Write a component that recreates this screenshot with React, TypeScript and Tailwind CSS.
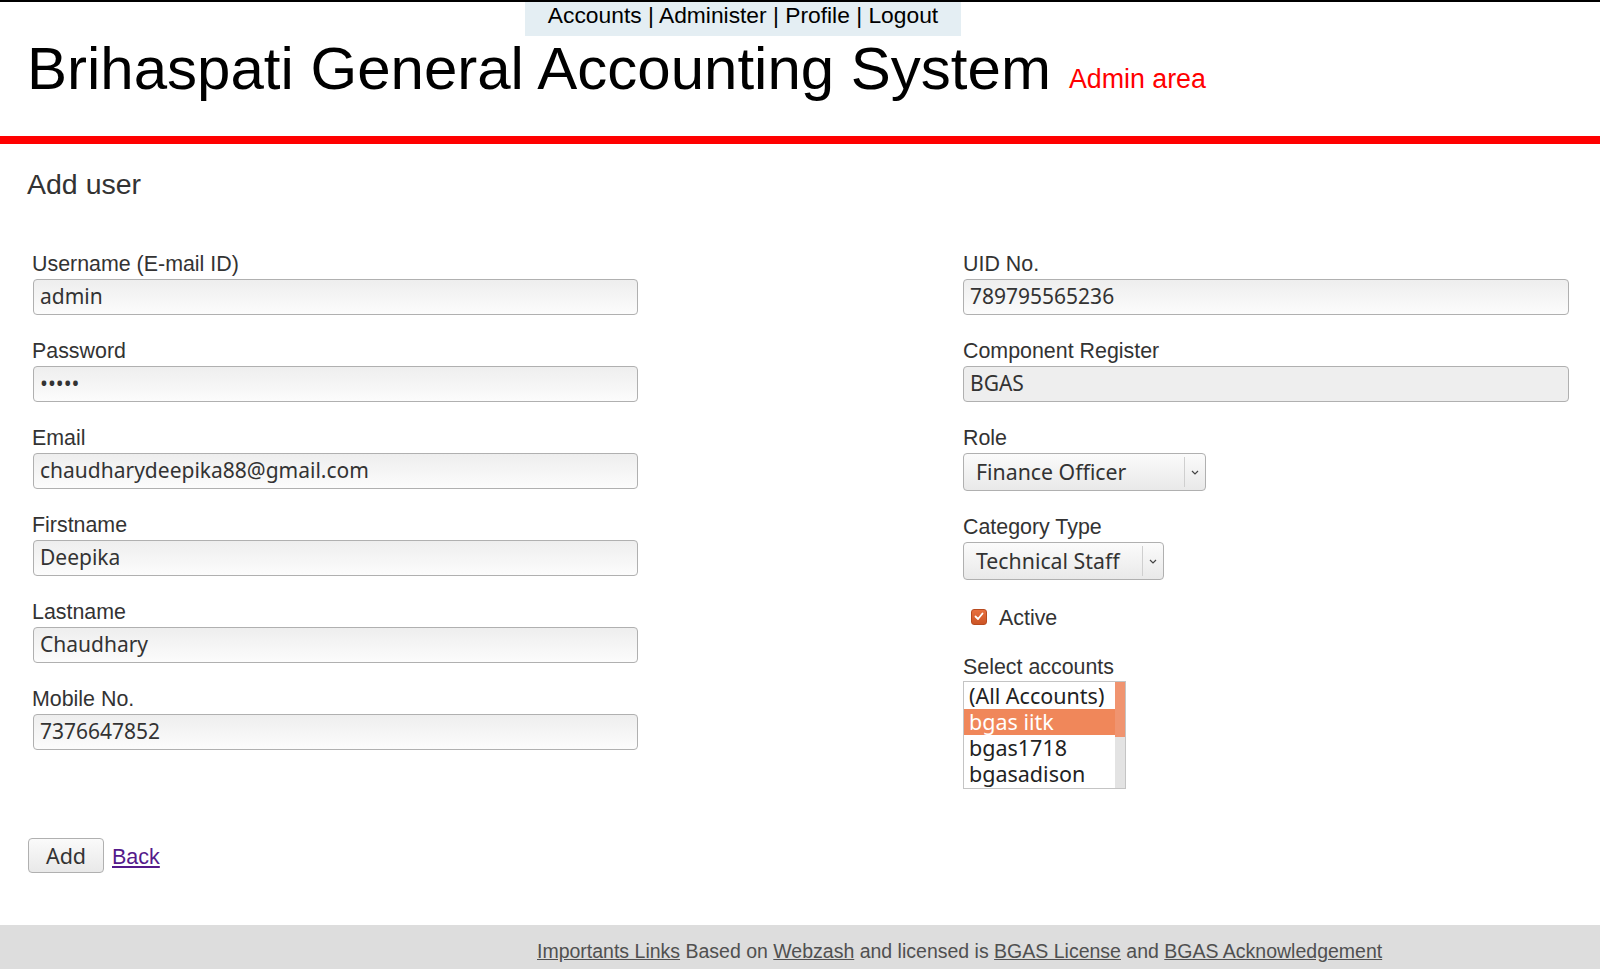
import React from "react";

const LAB = "font-['Liberation_Sans',Arial,sans-serif]";
const UB = "font-['Noto_Sans',sans-serif]";

function Field({ label, value, readOnly, shift }: { label: string; value: string; readOnly?: boolean; shift?: boolean }) {
  return (
    <div className="flex flex-col">
      <div className={`${LAB} text-[21.4px] leading-[24px] h-[24px] text-[#333] ${shift ? "-ml-[1px]" : ""}`}>{label}</div>
      <div
        className={`mt-[3px] h-[36px] rounded-[4px] border border-[#b0b0b0] flex items-center pl-[6px] ${UB} text-[21px] text-[#333] ${
          readOnly ? "bg-[#eeeeee]" : "bg-gradient-to-b from-[#eeeeee] to-[#fcfcfc]"
        }`}
      >
        {value}
      </div>
    </div>
  );
}

function SelectBox({ label, value, width }: { label: string; value: string; width: string }) {
  return (
    <div className="flex flex-col">
      <div className={`${LAB} text-[21.4px] leading-[24px] h-[24px] text-[#333]`}>{label}</div>
      <div
        className={`mt-[3px] h-[38px] ${width} rounded-[4px] border border-[#b0b0b0] bg-gradient-to-b from-[#fbfbfb] to-[#e9e9e9] flex items-center`}
      >
        <span className={`${UB} text-[21.3px] text-[#333] pl-[12px] flex-1`}>{value}</span>
        <span className="h-[30px] w-px bg-[#cfcfcf]" />
        <span className="w-[20px] flex items-center justify-center">
          <svg width="8" height="5" viewBox="0 0 8 5">
            <path d="M1 1 L4 4 L7 1" fill="none" stroke="#444" strokeWidth="1.2" />
          </svg>
        </span>
      </div>
    </div>
  );
}

export default function App() {
  const accounts = ["(All Accounts)", "bgas iitk", "bgas1718", "bgasadison"];
  return (
    <div className="w-[1600px] h-[969px] bg-white flex flex-col overflow-hidden">
      <div className="h-[2px] bg-black" />
      <div className="flex">
        <div
          className={`ml-[525px] w-[436px] h-[34px] bg-[#e4eef3] flex items-center justify-center ${LAB} text-[22.8px] text-black leading-none pb-[8px]`}
        >
          Accounts | Administer | Profile | Logout
        </div>
      </div>
      <div className="flex items-baseline pl-[27px] mt-[3px]">
        <h1 className={`${LAB} text-[60px] leading-[60px] text-black`}>Brihaspati General Accounting System</h1>
        <span className={`${LAB} text-[26.8px] text-[#ff0000] ml-[18px] relative -top-[1px]`}>Admin area</span>
      </div>
      <div className="mt-[36px] h-[8px] bg-[#ff0000]" />
      <div className={`mt-[25px] pl-[27px] ${LAB} text-[28.5px] leading-[30px] text-[#333]`}>Add user</div>

      <div className="mt-[53px] pl-[33px] grid grid-cols-[930px_606px] items-start">
        <div className="flex flex-col gap-[24px] w-[605px]">
          <Field shift label="Username (E-mail ID)" value="admin" />
          <Field shift label="Password" value="•••••" />
          <Field shift label="Email" value="chaudharydeepika88@gmail.com" />
          <Field shift label="Firstname" value="Deepika" />
          <Field shift label="Lastname" value="Chaudhary" />
          <Field shift label="Mobile No." value="7376647852" />
        </div>
        <div className="flex flex-col">
          <Field label="UID No." value="789795565236" />
          <div className="mt-[24px]">
            <Field label="Component Register" value="BGAS" readOnly />
          </div>
          <div className="mt-[24px]">
            <SelectBox label="Role" value="Finance Officer" width="w-[243px]" />
          </div>
          <div className="mt-[24px]">
            <SelectBox label="Category Type" value="Technical Staff" width="w-[201px]" />
          </div>
          <div className="mt-[26px] h-[24px] flex items-center">
            <div className="ml-[8px] -mt-[3px] w-[16px] h-[16px] rounded-[3px] bg-gradient-to-b from-[#e8703f] to-[#cc5525] border border-[#b84a1f] flex items-center justify-center">
              <svg width="10" height="9" viewBox="0 0 10 9">
                <path d="M1.5 4.5 L4 7 L8.5 1.5" fill="none" stroke="#fff" strokeWidth="1.8" strokeLinecap="round" strokeLinejoin="round" />
              </svg>
            </div>
            <span className={`ml-[12px] ${LAB} text-[21.4px] leading-[24px] text-[#333]`}>Active</span>
          </div>
          <div className={`mt-[25px] ${LAB} text-[21.4px] leading-[24px] h-[24px] text-[#333]`}>Select accounts</div>
          <div className="mt-[2px] w-[163px] h-[108px] border border-[#c4c4c4] flex">
            <div className="flex-1 flex flex-col pt-[1px]">
              {accounts.map((a, i) => (
                <div
                  key={a}
                  className={`h-[26px] flex items-center pl-[5px] ${UB} text-[21.5px] leading-none ${
                    i === 1 ? "bg-[#f0875a] text-white" : "text-[#222]"
                  }`}
                >
                  {a}
                </div>
              ))}
            </div>
            <div className="w-[10px] bg-[#e3e3e3] flex flex-col">
              <div className="h-[55px] bg-[#f09470]" />
            </div>
          </div>
        </div>
      </div>

      <div className="mt-[49px] pl-[28px] flex items-center">
        <div
          className={`w-[76px] h-[35px] rounded-[4px] border border-[#b0b0b0] bg-gradient-to-b from-[#fafafa] to-[#e9e9e9] flex items-center justify-center ${UB} text-[21.5px] text-[#333]`}
        >
          Add
        </div>
        <a href="#" className={`ml-[8px] ${LAB} text-[21.5px] text-[#551a8b] underline mt-[2px]`}>
          Back
        </a>
      </div>

      <div className="mt-[52px] h-[44px] bg-[#dddddd] pl-[537px] pt-[14px]">
        <div className={`${LAB} text-[19.5px] leading-[24px] text-[#505050] whitespace-nowrap`}>
          <a href="#" className="underline">Importants Links</a> Based on{" "}
          <a href="#" className="underline">Webzash</a> and licensed is{" "}
          <a href="#" className="underline">BGAS License</a> and{" "}
          <a href="#" className="underline">BGAS Acknowledgement</a>
        </div>
      </div>
    </div>
  );
}
